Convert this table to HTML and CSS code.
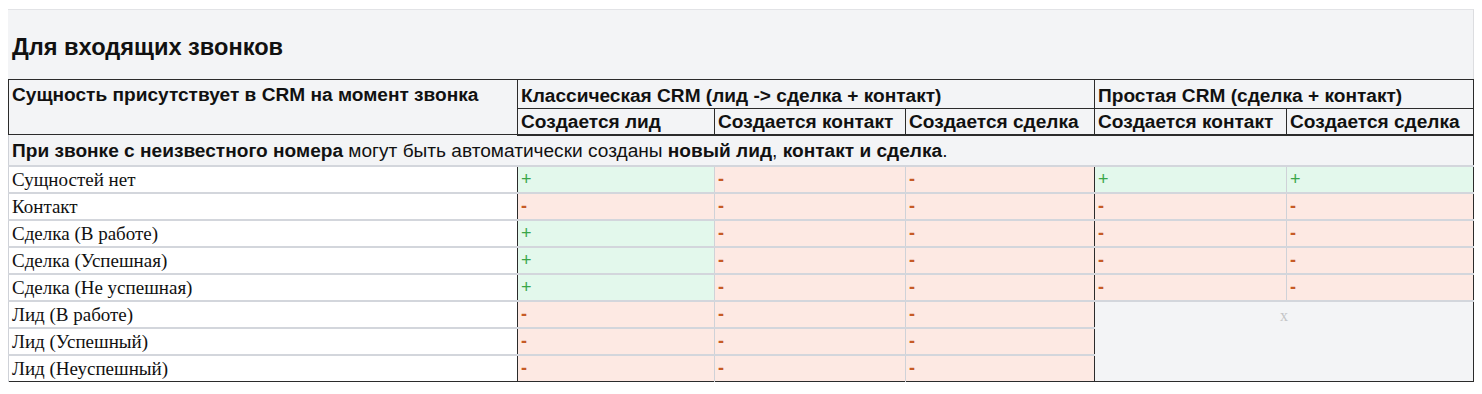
FILE: index.html
```html
<!DOCTYPE html>
<html lang="ru">
<head>
<meta charset="utf-8">
<link rel="stylesheet" href="styles.css">
</head>
<body>
<div class="panel">
  <h3 class="title">Для входящих звонков</h3>
  <table class="matrix">
    <colgroup>
      <col class="c-entity">
      <col class="c1">
      <col class="c2">
      <col class="c3">
      <col class="c4">
      <col class="c5">
    </colgroup>
    <thead>
      <tr class="h1">
        <th rowspan="2" class="th-entity">Сущность присутствует в CRM на момент звонка</th>
        <th colspan="3" class="group">Классическая CRM (лид -&gt; сделка + контакт)</th>
        <th colspan="2" class="group">Простая CRM (сделка + контакт)</th>
      </tr>
      <tr class="h2">
        <th class="start">Создается лид</th>
        <th>Создается контакт</th>
        <th>Создается сделка</th>
        <th class="start">Создается контакт</th>
        <th>Создается сделка</th>
      </tr>
    </thead>
    <tbody>
      <tr class="info">
        <td colspan="6"><b>При звонке с неизвестного номера</b> могут быть автоматически созданы <b>новый лид</b>, <b>контакт и сделка</b>.</td>
      </tr>
      <tr>
        <td class="name">Сущностей нет</td>
        <td class="yes start">+</td><td class="no">-</td><td class="no">-</td>
        <td class="yes start">+</td><td class="yes">+</td>
      </tr>
      <tr>
        <td class="name">Контакт</td>
        <td class="no start">-</td><td class="no">-</td><td class="no">-</td>
        <td class="no start">-</td><td class="no">-</td>
      </tr>
      <tr>
        <td class="name">Сделка (В работе)</td>
        <td class="yes start">+</td><td class="no">-</td><td class="no">-</td>
        <td class="no start">-</td><td class="no">-</td>
      </tr>
      <tr>
        <td class="name">Сделка (Успешная)</td>
        <td class="yes start">+</td><td class="no">-</td><td class="no">-</td>
        <td class="no start">-</td><td class="no">-</td>
      </tr>
      <tr>
        <td class="name">Сделка (Не успешная)</td>
        <td class="yes start">+</td><td class="no">-</td><td class="no">-</td>
        <td class="no start">-</td><td class="no">-</td>
      </tr>
      <tr>
        <td class="name">Лид (В работе)</td>
        <td class="no start">-</td><td class="no">-</td><td class="no">-</td>
        <td class="na start" rowspan="3" colspan="2">x</td>
      </tr>
      <tr>
        <td class="name">Лид (Успешный)</td>
        <td class="no start">-</td><td class="no">-</td><td class="no">-</td>
      </tr>
      <tr>
        <td class="name">Лид (Неуспешный)</td>
        <td class="no start">-</td><td class="no">-</td><td class="no">-</td>
      </tr>
    </tbody>
  </table>
</div>
</body>
</html>
```
FILE: styles.css
```css
html, body {
  margin: 0;
  padding: 0;
  background: #ffffff;
}

body {
  padding: 9px 8px 0 8px;
  font-family: "Liberation Sans", Arial, sans-serif;
  color: #111;
}

.panel {
  background: #f3f4f6;
  border-top: 1px solid #e2e3e6;
  border-right: 1px solid #dcdde0;
  width: 1465px;
}

.title {
  margin: 0;
  padding: 25px 4px 19px 4px;
  font-size: 23.6px;
  line-height: 25px;
  font-weight: bold;
  color: #111;
}

.matrix {
  width: 1465px;
  table-layout: fixed;
  border-collapse: collapse;
  border: 1px solid #2b2b2b;
  font-size: 19.1px;
}

.c-entity { width: 509px; }
.c1 { width: 197px; }
.c2 { width: 191px; }
.c3 { width: 189px; }
.c4 { width: 192px; }
.c5 { width: 187px; }

.matrix th {
  border: 1px solid #2b2b2b;
  text-align: left;
  font-weight: bold;
  padding: 0 3px;
  background: #f3f4f6;
  white-space: nowrap;
  line-height: 21px;
  overflow: hidden;
}

.th-entity {
  vertical-align: top;
  padding-top: 4px !important;
}

.h1 { height: 29px; }
.h1 th.group { padding-top: 2px; }
.h2 { height: 26px; }
.h2 th { border-bottom: 2px solid #2b2b2b; }

.info td {
  height: 29px;
  padding: 0 3px;
  background: #f3f4f6;
  border-bottom: 1px solid #2b2b2b;
  line-height: 21px;
}

.matrix tbody tr { height: 27px; }

.matrix td {
  border-top: 2px solid #d3d6dc;
  border-left: 1px solid #cfd2d8;
  padding: 0 3px;
  line-height: 21px;
  vertical-align: middle;
  white-space: nowrap;
}

.matrix .info td {
  border-top: none;
}

.name {
  font-family: "Liberation Serif", "Times New Roman", serif;
  background: #ffffff;
  font-size: 19px;
  color: #111;
  padding-left: 3px !important;
}

.matrix td.start {
  border-left: 1px solid #2b2b2b;
}

.yes {
  background: #e3f8ec;
  color: #3aa64a;
  font-size: 18px;
}

.no {
  background: #fde9e3;
  color: #c65a26;
  font-size: 18px;
  font-weight: bold;
}

.na {
  background: #f3f4f6;
  color: #c3c4c6;
  text-align: center;
  vertical-align: top !important;
  font-family: "Liberation Serif", "Times New Roman", serif;
  font-size: 16px !important;
  padding-top: 3px !important;
}
```
